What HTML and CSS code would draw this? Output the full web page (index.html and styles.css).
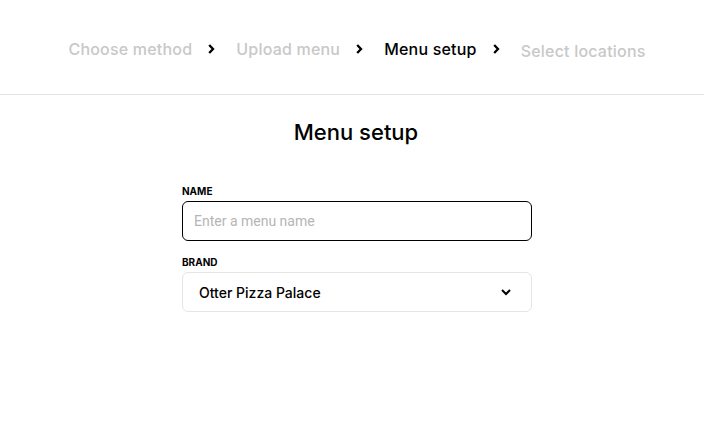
FILE: index.html
```html
<!DOCTYPE html>
<html>
<head>
<meta charset="utf-8">
<link rel="stylesheet" href="styles.css">
</head>
<body>
<header class="steps">
  <span class="step muted">Choose method</span>
  <svg class="chev" width="7" height="10" viewBox="0 0 7 10"><path d="M1.2 1 L5 5 L1.2 9" fill="none" stroke="#000" stroke-width="2.3"/></svg>
  <span class="step muted">Upload menu</span>
  <svg class="chev" width="7" height="10" viewBox="0 0 7 10"><path d="M1.2 1 L5 5 L1.2 9" fill="none" stroke="#000" stroke-width="2.3"/></svg>
  <span class="step active">Menu setup</span>
  <svg class="chev" width="7" height="10" viewBox="0 0 7 10"><path d="M1.2 1 L5 5 L1.2 9" fill="none" stroke="#000" stroke-width="2.3"/></svg>
  <span class="step muted last">Select locations</span>
</header>
<main class="content">
  <h1 class="title">Menu setup</h1>
  <form class="form">
    <label class="label">Name</label>
    <input class="input" type="text" placeholder="Enter a menu name">
    <label class="label brand">Brand</label>
    <div class="select">
      <span>Otter Pizza Palace</span>
      <svg width="12" height="12" viewBox="0 0 12 12"><path d="M2 4 L6 8 L10 4" fill="none" stroke="#000" stroke-width="2"/></svg>
    </div>
  </form>
</main>
</body>
</html>
```
FILE: styles.css
```css
* { box-sizing: border-box; }
body {
  margin: 0;
  font-family: Inter, "Noto Sans", sans-serif;
  background: #fff;
  color: #000;
}
.steps {
  height: 95px;
  border-bottom: 1px solid #e3e3e3;
  display: flex;
  align-items: center;
  justify-content: center;
  padding-top: 4px;
  padding-left: 10px;
}
.step { font-size: 16px; font-weight: 500; line-height: 20px; letter-spacing: 0.2px; }
.muted { color: #c8c8c8; }
.active { color: #000; }
.last { position: relative; top: 2px; }
.chev { display: block; margin: 0 21px 0 16px; }
.content {
  display: flex;
  flex-direction: column;
  align-items: center;
}
.title {
  margin: 23px 0 0;
  font-size: 22px;
  font-weight: 500;
  line-height: 28px;
  letter-spacing: 0;
  margin-left: 8px;
}
.form {
  width: 350px;
  margin-top: 39px;
  display: flex;
  flex-direction: column;
  margin-left: 10px;
}
.label {
  font-size: 10px;
  font-weight: 700;
  text-transform: uppercase;
  line-height: 12px;
  margin-bottom: 4px;
}
.brand { margin-top: 15px; }
.input {
  height: 40px;
  border: 1px solid #000;
  border-radius: 6px;
  padding: 0 11px;
  font-family: Roboto, sans-serif;
  font-size: 14px;
  outline: none;
}
.input::placeholder { color: #b5b5b5; }
.select {
  height: 40px;
  border: 1px solid #e5e5e5;
  border-radius: 6px;
  padding: 0 19px 0 16px;
  display: flex;
  align-items: center;
  justify-content: space-between;
  font-size: 14px;
  font-weight: 500;
}
```
